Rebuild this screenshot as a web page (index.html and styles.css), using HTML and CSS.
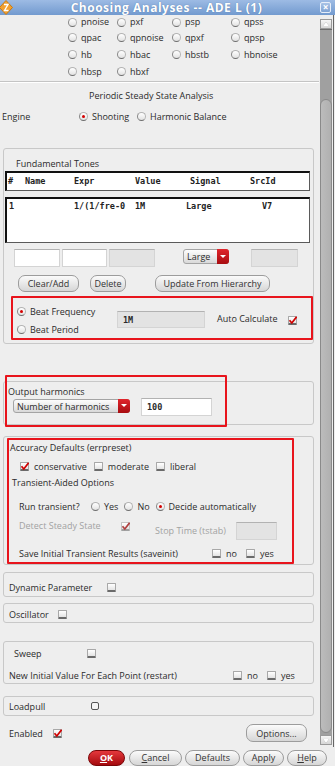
FILE: index.html
```html
<!DOCTYPE html>
<html lang="en">
  <head>
    <meta charset="UTF-8" />
    <meta name="viewport" content="width=device-width, initial-scale=1.0" />
    <title>Choosing Analyses -- ADE L (1)</title>
    <link rel="stylesheet" href="styles.css">
  </head>
  <body>
    <div class="titlebar">
      <svg class="app-icon" width="13" height="15" viewBox="0 0 13 15">
        <polygon points="6,0.5 12.5,7.5 6,14.5 -0.5,7.5" fill="#f2a030" stroke="#c97a10" stroke-width="1"/>
        <path d="M4 4.5 L8 4.5 L4.5 10.5 L8.5 10.5" stroke="#fff" stroke-width="1.4" fill="none"/>
      </svg>
      <span class="title">Choosing Analyses -- ADE L (1)</span>
      <span class="close">&#215;</span>
    </div>

    <div class="main">
      <div class="content">
        <div class="analysis-grid">
          <label class="opt"><span class="radio"></span>pnoise</label>
          <label class="opt"><span class="radio"></span>pxf</label>
          <label class="opt"><span class="radio"></span>psp</label>
          <label class="opt"><span class="radio"></span>qpss</label>
          <label class="opt"><span class="radio"></span>qpac</label>
          <label class="opt"><span class="radio"></span>qpnoise</label>
          <label class="opt"><span class="radio"></span>qpxf</label>
          <label class="opt"><span class="radio"></span>qpsp</label>
          <label class="opt"><span class="radio"></span>hb</label>
          <label class="opt"><span class="radio"></span>hbac</label>
          <label class="opt"><span class="radio"></span>hbstb</label>
          <label class="opt"><span class="radio"></span>hbnoise</label>
          <label class="opt"><span class="radio"></span>hbsp</label>
          <label class="opt"><span class="radio"></span>hbxf</label>
        </div>

        <div class="sep"></div>

        <div class="heading">Periodic Steady State Analysis</div>

        <div class="engine-row">
          <span class="engine-label">Engine</span>
          <label class="opt shooting"><span class="radio on"></span>Shooting</label>
          <label class="opt"><span class="radio"></span>Harmonic Balance</label>
        </div>

        <!-- Fundamental tones -->
        <div class="group tones">
          <div class="group-title">Fundamental Tones</div>
          <div class="table-box table-head">
            <span class="c-num">#</span>
            <span class="c-name">Name</span>
            <span class="c-expr">Expr</span>
            <span class="c-value">Value</span>
            <span class="c-signal">Signal</span>
            <span>SrcId</span>
          </div>
          <div class="table-box table-body">
            <span class="b-num">1</span>
            <span class="b-expr">1/(1/fre-0</span>
            <span class="b-value">1M</span>
            <span class="b-signal">Large</span>
            <span>V7</span>
          </div>
          <div class="input-row">
            <span class="field white w46"></span>
            <span class="field white w45"></span>
            <span class="field gray w46"></span>
            <span class="select sel-large">Large<span class="drop"></span></span>
            <span class="field gray src-field"></span>
          </div>
          <div class="button-row">
            <span class="btn clear-btn">Clear/Add</span>
            <span class="btn delete-btn">Delete</span>
            <span class="btn update-btn">Update From Hierarchy</span>
          </div>
          <div class="red-box beat-box">
            <div class="beat-opts">
              <label class="opt"><span class="radio on"></span>Beat Frequency</label>
              <label class="opt"><span class="radio"></span>Beat Period</label>
            </div>
            <span class="field gray beat-field">1M</span>
            <span class="auto-label">Auto Calculate</span>
            <span class="check on"><svg viewBox="0 0 9 9"><path d="M1.5 4.2 L3.8 7 L8.6 0.8"/></svg></span>
          </div>
        </div>

        <!-- Output harmonics -->
        <div class="group harmonics">
          <div class="red-mark"></div>
          <div class="harm-title">Output harmonics</div>
          <div class="harm-row">
            <span class="select sel-harm">Number of harmonics<span class="drop"></span></span>
            <span class="field white harm-field">100</span>
          </div>
        </div>

        <!-- Accuracy -->
        <div class="group accuracy">
          <div class="red-box acc-box">
            <div class="acc-title">Accuracy Defaults (errpreset)</div>
            <div class="row preset-row">
              <span class="check on"><svg viewBox="0 0 9 9"><path d="M1.5 4.2 L3.8 7 L8.6 0.8"/></svg></span>
              <span class="lbl">conservative</span>
              <span class="check"></span>
              <span class="lbl">moderate</span>
              <span class="check"></span>
              <span class="lbl">liberal</span>
            </div>
            <div class="trans-title">Transient-Aided Options</div>
            <div class="row run-row">
              <span class="run-label">Run transient?</span>
              <label class="opt"><span class="radio"></span>Yes</label>
              <label class="opt"><span class="radio"></span>No</label>
              <label class="opt"><span class="radio on"></span>Decide automatically</label>
            </div>
            <div class="detect-row">
              <span class="dim detect-label">Detect Steady State</span>
              <span class="check on dim-check"><svg viewBox="0 0 9 9"><path d="M1.5 4.2 L3.8 7 L8.6 0.8"/></svg></span>
              <span class="dim stop-label">Stop Time (tstab)</span>
              <span class="field gray stop-field"></span>
            </div>
            <div class="row save-row">
              <span class="save-label">Save Initial Transient Results (saveinit)</span>
              <span class="check"></span>
              <span class="lbl">no</span>
              <span class="check"></span>
              <span class="lbl">yes</span>
            </div>
          </div>
        </div>

        <div class="group single dynamic">
          <div class="row">
            <span class="dyn-label">Dynamic Parameter</span>
            <span class="check"></span>
          </div>
        </div>

        <div class="group single oscillator">
          <div class="row">
            <span class="osc-label">Oscillator</span>
            <span class="check"></span>
          </div>
        </div>

        <div class="group sweep">
          <div class="row sweep-row">
            <span class="sweep-label">Sweep</span>
            <span class="check"></span>
          </div>
          <div class="row restart-row">
            <span class="restart-label">New Initial Value For Each Point (restart)</span>
            <span class="check"></span>
            <span class="lbl">no</span>
            <span class="check"></span>
            <span class="lbl">yes</span>
          </div>
        </div>

        <div class="group single loadpull">
          <div class="row">
            <span class="load-label">Loadpull</span>
            <span class="check box"></span>
          </div>
        </div>

        <div class="enabled-row">
          <span class="enabled-label">Enabled</span>
          <span class="check on"><svg viewBox="0 0 9 9"><path d="M1.5 4.2 L3.8 7 L8.6 0.8"/></svg></span>
          <span class="btn options-btn">Options...</span>
        </div>
      </div>

      <div class="scrollbar">
        <div class="arrow up"></div>
        <div class="track"><div class="thumb"></div></div>
        <div class="arrow down"></div>
      </div>
      <div class="edge"></div>
    </div>

    <div class="footer">
      <span class="btn ok-btn"><u>O</u>K</span>
      <span class="btn cancel-btn"><u>C</u>ancel</span>
      <span class="btn defaults-btn">Defaults</span>
      <span class="btn apply-btn">Apply</span>
      <span class="btn help-btn"><u>H</u>elp</span>
    </div>
  </body>
</html>
```

FILE: styles.css
```css
body {
  margin: 0;
  width: 335px;
  height: 766px;
  overflow: hidden;
  background-color: #eeeeee;
  font-family: "Open Sans", "DejaVu Sans", sans-serif;
  font-size: 9px;
  color: #2b2b2b;
}

/* Title bar */
.titlebar {
  height: 15px;
  display: flex;
  align-items: center;
  background: linear-gradient(#9dbbe4, #729acf);
  color: #fff;
}

.app-icon {
  flex: 0 0 13px;
}

.title {
  flex: 1;
  text-align: center;
  font-weight: bold;
  font-size: 12px;
  line-height: 15px;
  letter-spacing: 0.5px;
  text-shadow: 0 0 1px #4a6f9f;
  white-space: nowrap;
}

.close {
  width: 9px;
  height: 9px;
  margin-right: 4px;
  border: 1px solid #e6eef9;
  border-radius: 2px;
  background: linear-gradient(#a9c3e6, #7ea2d3);
  font-size: 10px;
  line-height: 8px;
  text-align: center;
  font-weight: bold;
}

/* Main area */
.main {
  height: 732px;
  display: flex;
  overflow: hidden;
}

.content {
  flex: 0 0 319px;
  overflow: hidden;
}

/* Common controls */
.opt {
  display: flex;
  align-items: center;
  gap: 4px;
  white-space: nowrap;
}

.radio {
  flex: 0 0 auto;
  width: 7px;
  height: 7px;
  border: 1px solid #b4b4b4;
  border-bottom-color: #6e6e6e;
  border-left-color: #8a8a8a;
  border-radius: 50%;
  background: linear-gradient(#ffffff, #e2e2e2);
  position: relative;
}

.radio.on::after {
  content: "";
  position: absolute;
  left: 2px;
  top: 2px;
  width: 3px;
  height: 3px;
  border-radius: 50%;
  background-color: #d40000;
}

.check {
  flex: 0 0 auto;
  width: 7px;
  height: 6px;
  border: 1px solid #a8a8a8;
  border-bottom: 2px solid #6a6a6a;
  border-radius: 1px;
  background: linear-gradient(#ffffff, #e4e4e4);
  position: relative;
}

.check svg {
  position: absolute;
  left: -1px;
  top: -1px;
  width: 9px;
  height: 9px;
}

.check path {
  stroke: #d00000;
  stroke-width: 1.7;
  fill: none;
}

.check.box {
  width: 6px;
  height: 6px;
  border: 1px solid #555;
  border-radius: 2px;
  background: #f4f4f4;
}

.dim-check path {
  stroke: #b04040;
}

.lbl {
  flex-shrink: 0;
  margin-left: 5px;
}

.row {
  display: flex;
  align-items: center;
  height: 14px;
  white-space: nowrap;
}

.row > span {
  flex-shrink: 0;
}

.field {
  display: inline-block;
  flex-shrink: 0;
  box-sizing: border-box;
  height: 18px;
  border: 1px solid #d4d4d4;
  border-top-color: #b2b2b2;
  font-family: "DejaVu Sans Mono", monospace;
  font-weight: bold;
  font-size: 8.5px;
  line-height: 16px;
  padding-left: 5px;
}

.field.white {
  background-color: #ffffff;
}

.field.gray {
  background-color: #e3e3e3;
}

.select {
  display: inline-flex;
  flex-shrink: 0;
  align-items: center;
  box-sizing: border-box;
  height: 15px;
  padding-left: 3px;
  border: 1px solid #a4a4a4;
  border-radius: 3px;
  background: linear-gradient(#fdfdfd, #d9d9d9);
  position: relative;
  white-space: nowrap;
}

.drop {
  position: absolute;
  right: -1px;
  top: -1px;
  width: 12px;
  height: 15px;
  border-radius: 0 3px 3px 0;
  background: linear-gradient(#e0262c, #a80c10);
}

.drop::after {
  content: "";
  position: absolute;
  left: 3px;
  top: 6px;
  border-left: 3px solid transparent;
  border-right: 3px solid transparent;
  border-top: 3px solid #ffffff;
}

.btn {
  display: inline-flex;
  flex-shrink: 0;
  align-items: center;
  justify-content: center;
  box-sizing: border-box;
  height: 17px;
  border: 1px solid #9c9c9c;
  border-radius: 7px;
  background: linear-gradient(#fbfbfb, #d6d6d6);
  white-space: nowrap;
  color: #333;
}

.red-box {
  box-sizing: border-box;
  border: 2px solid #e8141c;
  border-radius: 1px;
}

/* Analysis list */
.analysis-grid {
  margin-left: 68px;
  display: grid;
  grid-template-columns: 49px 55px 59px auto;
  grid-template-rows: 14px 17px 17px 17px;
  align-items: center;
  line-height: 10px;
}

.sep {
  margin-top: 1px;
  height: 0;
  border-top: 1px solid #c4c4c4;
  border-bottom: 1px solid #ffffff;
}

.heading {
  margin-top: 6px;
  height: 14px;
  line-height: 14px;
  padding-left: 89px;
}

.engine-row {
  margin-top: 6px;
  height: 14px;
  display: flex;
  align-items: center;
}

.engine-label {
  width: 77px;
  padding-left: 2px;
}

.shooting {
  width: 58px;
}

/* Group boxes */
.group {
  box-sizing: border-box;
  margin-left: 3px;
  width: 311px;
  border: 1px solid #c8c8c8;
  border-radius: 3px;
}

.tones {
  margin-top: 25px;
  padding-bottom: 3px;
}

.group-title {
  padding: 8px 0 0 12px;
  height: 14px;
  line-height: 14px;
}

.table-box {
  box-sizing: border-box;
  margin-left: 1px;
  width: 305px;
  background-color: #ffffff;
  border: 1px solid #5a5a5a;
  border-top: 2px solid #111111;
  border-left: 2px solid #111111;
  display: flex;
  font-family: "DejaVu Sans Mono", monospace;
  font-weight: bold;
  font-size: 8.5px;
  line-height: 12px;
  color: #222;
  white-space: nowrap;
}

.table-head {
  height: 20px;
  padding: 2px 0 0 1px;
}

.table-body {
  margin-top: 6px;
  height: 46px;
  padding: 1px 0 0 2px;
}

.c-num { width: 17px; }
.c-name { width: 49px; }
.c-expr { width: 61px; }
.c-value { width: 55px; }
.c-signal { width: 60px; }

.b-num { width: 65px; }
.b-expr { width: 61px; }
.b-value { width: 51px; }
.b-signal { width: 76px; }

.input-row {
  margin: 6px 0 0 10px;
  display: flex;
  align-items: flex-start;
}

.w46 { width: 46px; }
.w45 { width: 45px; margin-left: 2px; }
.input-row .gray.w46 { margin-left: 2px; }

.sel-large {
  margin-left: 28px;
  width: 46px;
}

.src-field {
  margin-left: 22px;
  width: 47px;
}

.button-row {
  margin: 8px 0 0 14px;
  display: flex;
}

.clear-btn { width: 61px; }
.delete-btn { width: 36px; margin-left: 11px; }
.update-btn { width: 115px; margin-left: 29px; }

.beat-box {
  margin: 4px 0 0 7px;
  height: 44px;
  display: flex;
  align-items: flex-start;
  white-space: nowrap;
}

.beat-opts {
  flex-shrink: 0;
  width: 100px;
  padding: 6px 0 0 4px;
}

.beat-opts .opt {
  height: 14px;
}

.beat-opts .opt + .opt {
  margin-top: 4px;
}

.beat-field {
  margin-top: 13px;
  width: 88px;
  height: 17px;
}

.auto-label {
  flex-shrink: 0;
  margin: 14px 0 0 12px;
  width: 71px;
  line-height: 14px;
}

.beat-box .check {
  margin-top: 18px;
}

/* Output harmonics */
.harmonics {
  margin-top: 37px;
  padding: 4px 0 8px 0;
  position: relative;
}

.red-mark {
  position: absolute;
  left: 1px;
  top: -7px;
  width: 222px;
  height: 52px;
  box-sizing: border-box;
  border: 2px solid #e8141c;
  border-radius: 1px;
}

.harm-title {
  padding-left: 4px;
  height: 12px;
  line-height: 12px;
}

.harm-row {
  height: 18px;
  display: flex;
  align-items: center;
}

.sel-harm {
  margin: -2px 0 0 9px;
  width: 117px;
  height: 14px;
}

.sel-harm .drop {
  height: 14px;
}

.sel-harm .drop::after {
  top: 5px;
}

.harm-field {
  margin-left: 11px;
  width: 71px;
}

/* Accuracy */
.accuracy {
  margin-top: 11px;
  padding-top: 1px;
}

.acc-box {
  margin-left: 3px;
  width: 287px;
  padding: 2px 0 2px 1px;
}

.acc-title {
  height: 12px;
  line-height: 12px;
}

.preset-row {
  margin-top: 5px;
  padding-left: 10px;
}

.preset-row .lbl {
  margin-right: 7px;
}

.trans-title {
  margin-top: 4px;
  padding-left: 2px;
  height: 12px;
  line-height: 12px;
}

.run-row {
  margin-top: 10px;
  padding-left: 9px;
}

.run-label {
  width: 72px;
}

.run-row .opt {
  margin-right: 6px;
}

.detect-row {
  margin-top: 9px;
  height: 18px;
  padding-left: 9px;
  display: flex;
  align-items: flex-start;
  white-space: nowrap;
}

.detect-row > span {
  flex-shrink: 0;
}

.dim {
  color: #a2a2a2;
  line-height: 12px;
}

.detect-label {
  margin-top: -2px;
  width: 102px;
}

.dim-check {
  border-color: #c4c4c4;
  border-bottom-color: #a0a0a0;
}

.stop-label {
  margin: 3px 0 0 25px;
  width: 81px;
}

.stop-field {
  width: 41px;
  height: 18px;
}

.save-row {
  margin-top: 6px;
  padding-left: 9px;
}

.save-label {
  width: 193px;
}

.save-row .lbl {
  margin-right: 9px;
}

/* Single line groups */
.dynamic {
  margin-top: 7px;
  padding: 7px 0 2px 5px;
}

.dyn-label { width: 98px; }

.oscillator {
  margin-top: 6px;
  padding: 3px 0 1px 5px;
}

.osc-label { width: 49px; }

.sweep {
  margin-top: 18px;
  padding: 4px 0 1px 5px;
}

.sweep-row {
  padding-left: 5px;
}

.sweep-label { width: 73px; }

.restart-row {
  margin-top: 8px;
}

.restart-label { width: 224px; }

.restart-row .lbl {
  margin-right: 9px;
}

.loadpull {
  margin-top: 12px;
  padding: 2px 0 2px 5px;
}

.load-label { width: 82px; }

.enabled-row {
  margin-top: 8px;
  height: 18px;
  padding-left: 9px;
  display: flex;
  align-items: center;
}

.enabled-label { width: 44px; }

.options-btn {
  margin-left: 184px;
  width: 61px;
  height: 18px;
}

/* Scrollbar */
.scrollbar {
  flex: 0 0 12px;
  margin: 4px 0 2px 1px;
  display: flex;
  flex-direction: column;
  background-color: #a0a0a0;
}

.arrow {
  box-sizing: border-box;
  height: 10px;
  border: 1px solid #9a9a9a;
  background: linear-gradient(#f6f6f6, #d6d6d6);
  position: relative;
}

.arrow::after {
  content: "";
  position: absolute;
  left: 2px;
  border-left: 3px solid transparent;
  border-right: 3px solid transparent;
}

.arrow.up::after {
  top: 2px;
  border-bottom: 4px solid #ffffff;
  filter: drop-shadow(0 0 0.5px #888);
}

.arrow.down::after {
  top: 3px;
  border-top: 4px solid #ffffff;
  filter: drop-shadow(0 0 0.5px #888);
}

.track {
  flex: 1;
  display: flex;
  padding: 69px 0 2px 0;
  border-top: 1px solid #6c6c6c;
}

.thumb {
  flex: 1;
  border: 1px solid #8a8a8a;
  border-radius: 6px;
  background: linear-gradient(90deg, #bcbcbc, #b0b0b0);
}

.edge {
  flex: 0 0 1px;
  margin-left: 1px;
  border-left: 1px solid #666;
}

/* Footer */
.footer {
  height: 19px;
  display: flex;
  align-items: center;
  padding: 2px 9px 0 88px;
  box-sizing: border-box;
}

.footer .btn {
  height: 16px;
  border-radius: 8px;
  margin-right: 3px;
}

.ok-btn {
  width: 37px;
  background: linear-gradient(#e5383c, #a40a0e);
  border-color: #7a0608;
  color: #ffffff;
  font-weight: bold;
}

.footer .ok-btn { margin-right: 4px; }
.cancel-btn { width: 53px; }
.defaults-btn { width: 55px; }
.apply-btn { width: 41px; }
.footer .help-btn { width: 40px; margin-right: 0; }
```
